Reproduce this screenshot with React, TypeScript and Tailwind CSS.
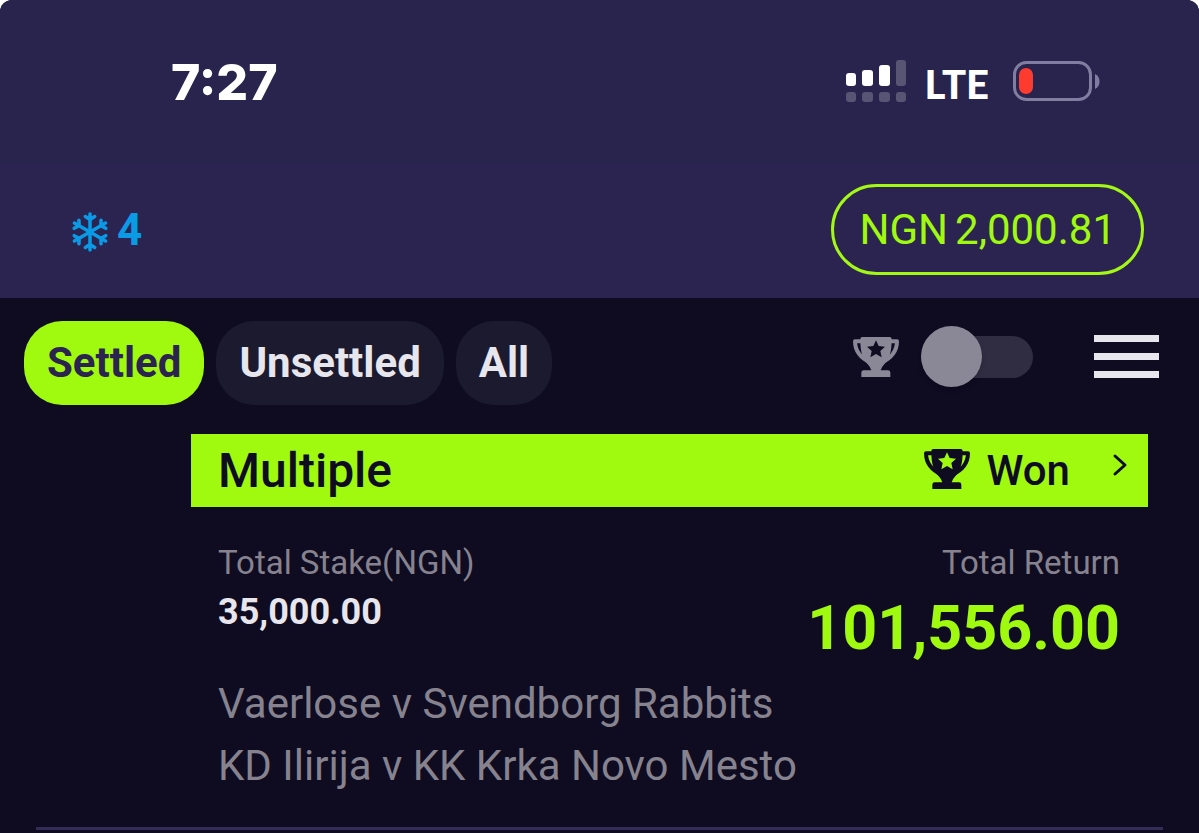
import type { ReactNode } from "react";

const matches = [
  "Vaerlose v Svendborg Rabbits",
  "KD Ilirija v KK Krka Novo Mesto",
];

export default function App() {
  return (
    <div className="min-h-screen bg-white font-['Roboto',sans-serif]">
      <div className="flex min-h-screen flex-col overflow-hidden rounded-t-xl bg-[#0f0c22]">
        <StatusBar />
        <Header />
        <main className="flex grow flex-col">
          <Filters />
          <BetCard />
        </main>
      </div>
    </div>
  );
}

function StatusBar() {
  return (
    <div className="flex h-[163px] items-center justify-between bg-[#28244d] pr-[99px] pl-[171px] text-white">
      <span className="font-['Inter',sans-serif] text-[50px] leading-none font-extrabold">
        7:27
      </span>
      <div className="flex items-center">
        <SignalIcon className="h-[43px] w-[62px]" />
        <span className="mr-6 ml-[18px] pt-1 font-['Lato',sans-serif] text-[40px] leading-none font-black">
          LTE
        </span>
        <BatteryIcon className="h-[41px] w-[87px]" />
      </div>
    </div>
  );
}

function Header() {
  return (
    <header className="flex h-[135px] items-center justify-between bg-[#2b2451] pr-[55px] pb-0.5 pl-[71px]">
      <div className="flex items-center gap-2 text-[#0a9ae6]">
        <SnowflakeIcon className="mt-1 h-10 w-[38px]" />
        <span className="text-[44px] leading-none font-bold">4</span>
      </div>
      <button
        type="button"
        className="flex h-[91px] items-center gap-[7px] rounded-full border-3 border-[#a3f816] px-[25px] text-[42px] leading-none text-[#a0fa10]"
      >
        <span>NGN</span>
        <span>2,000.81</span>
      </button>
    </header>
  );
}

function Filters() {
  return (
    <div className="flex h-[129px] items-center justify-between pr-10 pl-6">
      <nav className="flex gap-3">
        <FilterButton active>Settled</FilterButton>
        <FilterButton>Unsettled</FilterButton>
        <FilterButton>All</FilterButton>
      </nav>
      <div className="flex items-center pb-3">
        <label htmlFor="won-only" className="text-[#8a8796]">
          <TrophyIcon className="h-10 w-[46px]" />
        </label>
        <input
          id="won-only"
          type="checkbox"
          role="switch"
          aria-label="Won bets only"
          className="ml-[22px] flex h-[42px] w-[112px] appearance-none items-center rounded-full bg-[#302d42] before:size-[61px] before:shrink-0 before:rounded-full before:bg-[#8a8796] before:shadow-md before:content-[''] checked:justify-end"
        />
        <button
          type="button"
          aria-label="Menu"
          className="ml-[61px] flex w-[65px] flex-col gap-[11px]"
        >
          <span className="h-[7px] w-full bg-[#e7e6ed]" />
          <span className="h-[7px] w-full bg-[#e7e6ed]" />
          <span className="h-[7px] w-full bg-[#e7e6ed]" />
        </button>
      </div>
    </div>
  );
}

function FilterButton({
  active = false,
  children,
}: {
  active?: boolean;
  children: ReactNode;
}) {
  return (
    <button
      type="button"
      aria-pressed={active}
      className={`h-[84px] rounded-[38px] px-[23px] text-[42px] leading-none font-bold ${
        active ? "bg-[#a0fa10] text-[#2b2451]" : "bg-[#1c1a2f] text-[#e7e6ed]"
      }`}
    >
      {children}
    </button>
  );
}

function BetCard() {
  return (
    <article className="mt-[7px] flex flex-col">
      <div className="mr-[51px] ml-[191px]">
        <a
          href="#bet"
          className="flex h-[73px] items-center bg-[#a0fa10] pr-5 pl-[27px] font-medium text-[#0f0c22]"
        >
          <h2 className="grow text-[48px] leading-none">Multiple</h2>
          <TrophyIcon className="mb-1 h-10 w-[46px]" />
          <span className="mr-[42px] ml-4 text-[42px] leading-none">Won</span>
          <ChevronIcon className="mb-3 h-6 w-4" />
        </a>
        <div className="mt-9 flex justify-between pr-7 pl-[27px]">
          <dl>
            <dt className="text-[33px] leading-10 text-[#86838f]">
              Total Stake(NGN)
            </dt>
            <dd className="mt-[7px] text-4xl leading-11 font-bold text-[#e7e6ed]">
              35,000.00
            </dd>
          </dl>
          <dl className="text-right">
            <dt className="text-[33px] leading-10 text-[#86838f]">
              Total Return
            </dt>
            <dd className="mt-[11px] text-[61px] leading-[68px] font-bold text-[#a0fa10]">
              101,556.00
            </dd>
          </dl>
        </div>
        <ul className="mt-[11px] pr-7 pl-[27px] text-[42px] leading-[62px] text-[#86838f]">
          {matches.map((match) => (
            <li key={match}>{match}</li>
          ))}
        </ul>
      </div>
      <hr className="mx-9 mt-[30px] border-t-3 border-[#332c56]" />
    </article>
  );
}

function SignalIcon(props: { className: string }) {
  return (
    <svg {...props} viewBox="0 0 62 43" fill="currentColor">
      <rect x="1" y="13" width="10" height="13" rx="3" />
      <rect x="17" y="10" width="11" height="16" rx="3" />
      <rect x="34" y="5" width="11" height="21" rx="3" />
      <g opacity="0.22">
        <rect x="51" y="0" width="10" height="26" rx="3" />
        <rect x="1" y="32" width="10" height="10" rx="3" />
        <rect x="17" y="32" width="11" height="10" rx="3" />
        <rect x="34" y="32" width="11" height="10" rx="3" />
        <rect x="51" y="32" width="10" height="10" rx="3" />
      </g>
    </svg>
  );
}

function BatteryIcon(props: { className: string }) {
  return (
    <svg {...props} viewBox="0 0 87 41" fill="none">
      <rect
        x="1.5"
        y="1.5"
        width="76"
        height="37"
        rx="12"
        stroke="#817da0"
        strokeWidth="3"
      />
      <rect x="6" y="7" width="14" height="26" rx="7" fill="#ff3b30" />
      <path d="M82 13c6 2 6 13 0 15z" fill="#817da0" />
    </svg>
  );
}

function SnowflakeIcon(props: { className: string }) {
  return (
    <svg
      {...props}
      viewBox="-19 -20 38 40"
      fill="none"
      stroke="currentColor"
      strokeWidth="3.5"
      strokeLinecap="round"
      strokeLinejoin="round"
    >
      {[0, 60, 120, 180, 240, 300].map((angle) => (
        <path
          key={angle}
          d="M0 0V-18M-4.700 -15.500 0 -12.500 4.700 -15.500"
          transform={`rotate(${angle})`}
        />
      ))}
    </svg>
  );
}

function TrophyIcon(props: { className: string }) {
  return (
    <svg {...props} viewBox="0 0 138 120" fill="none">
      <path
        d="M24 13H6C6 42 24 64 54 78M114 13h18c0 29-18 51-48 65"
        stroke="currentColor"
        strokeWidth="12"
        strokeLinejoin="round"
      />
      <path
        fill="currentColor"
        fillRule="evenodd"
        d="M28 0h82q6 0 6 6c0 40-6 58-24 78q-7 7-9 16h22q7 0 7 7v13H25v-13q0-7 7-7h23q-2-9-9-16C28 64 22 46 22 6q0-6 6-6ZM69 10l-8 17-19 2 14 13-4 19 17-10 17 10-4-19 14-13-19-2Z"
      />
    </svg>
  );
}

function ChevronIcon(props: { className: string }) {
  return (
    <svg
      {...props}
      viewBox="0 0 16 24"
      fill="none"
      stroke="currentColor"
      strokeWidth="3"
      strokeLinecap="round"
      strokeLinejoin="round"
    >
      <path d="m3 3 10 9-10 9" />
    </svg>
  );
}
